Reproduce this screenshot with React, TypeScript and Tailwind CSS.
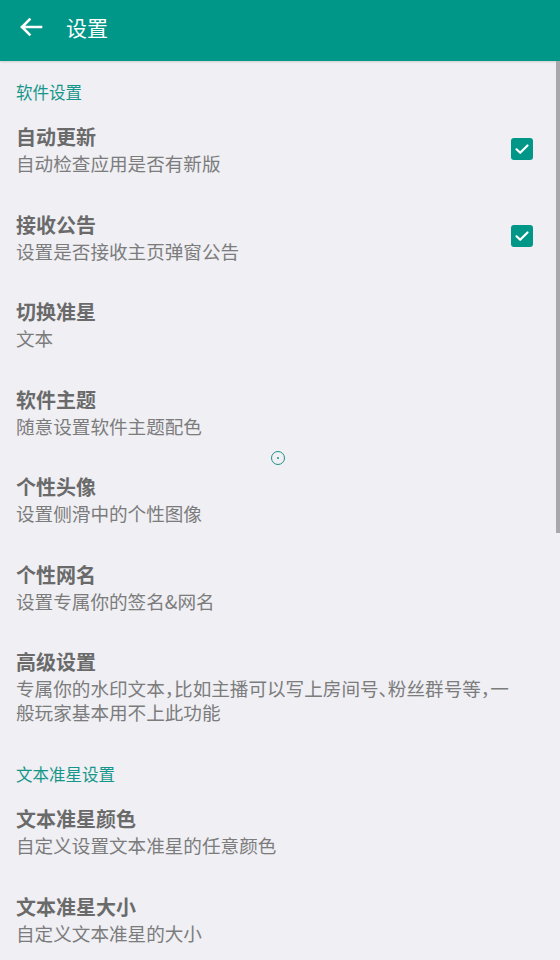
import React from "react";

const items1 = [
  { t: "自动更新", s: "自动检查应用是否有新版", c: true },
  { t: "接收公告", s: "设置是否接收主页弹窗公告", c: true },
  { t: "切换准星", s: "文本" },
  { t: "软件主题", s: "随意设置软件主题配色" },
  { t: "个性头像", s: "设置侧滑中的个性图像" },
  { t: "个性网名", s: "设置专属你的签名&网名" },
  {
    t: "高级设置",
    s: "专属你的水印文本，比如主播可以写上房间号、粉丝群号等，一般玩家基本用不上此功能",
  },
];
const items2 = [
  { t: "文本准星颜色", s: "自定义设置文本准星的任意颜色" },
  { t: "文本准星大小", s: "自定义文本准星的大小" },
];

function Item({ t, s, c }: { t: string; s: string; c?: boolean }) {
  return (
    <div className="flex items-center pl-4 pr-[27px] pt-[18px] pb-[18px]">
      <div className="flex-1 pr-[9px]">
        <div className="text-[20px] leading-[28px] font-bold text-[#6a6a6a]">{t}</div>
        <div className="text-[18.6px] leading-[23.5px] text-[#7c7c7c] [font-feature-settings:'halt']">{s}</div>
      </div>
      {c && (
        <div className="w-[22px] h-[22px] rounded-[3px] bg-[#009688] flex items-center justify-center">
          <svg width="16" height="16" viewBox="0 0 16 16">
            <path d="M2.5 8.3 L6.2 11.8 L13.5 4.5" fill="none" stroke="#ffffff" strokeWidth="2.2" strokeLinecap="round" strokeLinejoin="round" />
          </svg>
        </div>
      )}
    </div>
  );
}

export default function App() {
  return (
    <div
      className="relative w-[560px] h-[960px] overflow-hidden bg-[#efeff4]"
      style={{ fontFamily: '"Noto Sans CJK SC", "Noto Sans", sans-serif' }}
    >
      <div className="h-[61px] bg-[#009688] flex items-center pb-[7px] shadow-[0_1px_2px_rgba(0,0,0,0.15)]">
        <div className="w-[66px] flex items-center pl-[19px]">
          <svg width="24" height="20" viewBox="0 0 24 20">
            <path d="M22 10 H3 M10.5 2.5 L3 10 L10.5 17.5" fill="none" stroke="#ffffff" strokeWidth="2.6" strokeLinecap="square" />
          </svg>
        </div>
        <div className="text-[21px] text-white leading-none">设置</div>
      </div>

      <div className="pl-4 pt-[18px] text-[16.5px] leading-[26px] text-[#16968a]">软件设置</div>
      {items1.map((it) => (
        <Item key={it.t} {...it} />
      ))}
      <div className="pl-4 pt-[20px] text-[16.5px] leading-[26px] text-[#16968a]">文本准星设置</div>
      {items2.map((it) => (
        <Item key={it.t} {...it} />
      ))}

      <div className="absolute left-[271px] top-[451px] w-[14px] h-[14px] rounded-full border-[1.5px] border-[#1f8f86] flex items-center justify-center">
        <div className="w-[2px] h-[2px] rounded-full bg-[#1f8f86]" />
      </div>
      <div className="absolute right-0 top-[61px] w-[4px] h-[472px] bg-[#a9a9ad]" />
    </div>
  );
}
